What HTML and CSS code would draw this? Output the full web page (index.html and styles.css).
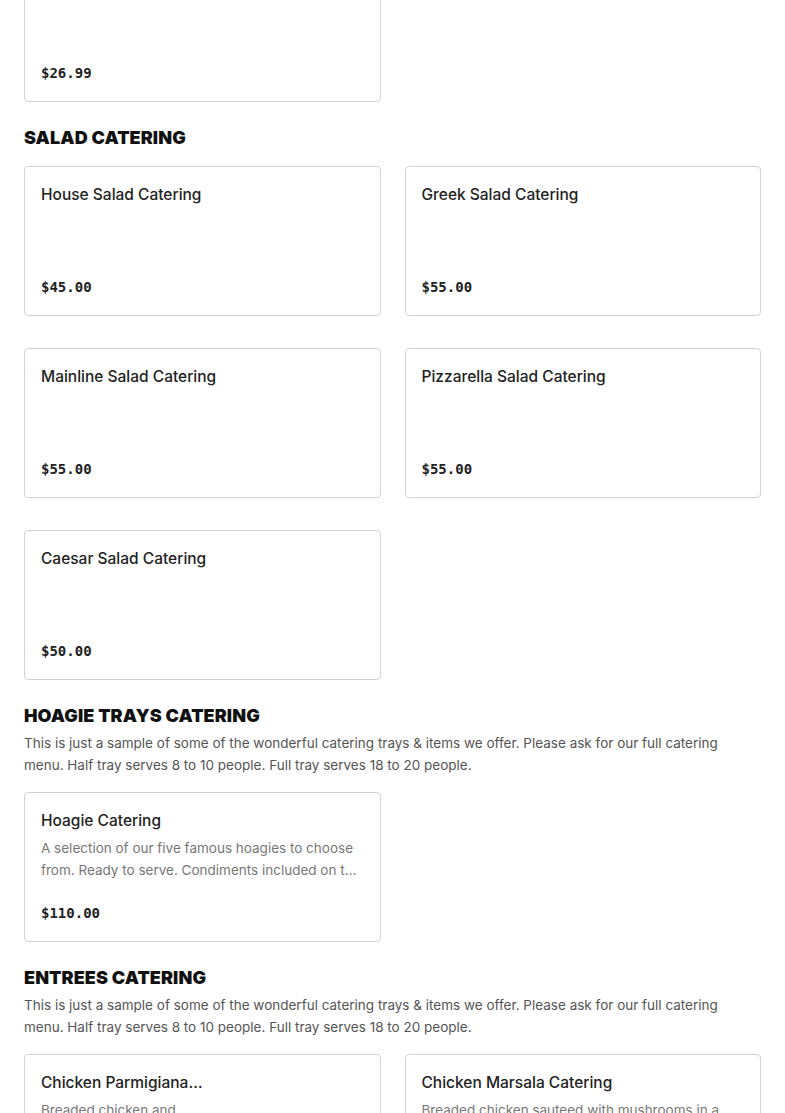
FILE: index.html
```html
<!DOCTYPE html>
<html lang="en">
<head>
<meta charset="UTF-8" />
<meta name="viewport" content="width=device-width, initial-scale=1" />
<title>Catering Menu</title>
<link rel="stylesheet" href="styles.css">
</head>
<body>
  <main class="menu">
    <section class="category category-first">
      <div class="item-grid">
        <div class="item-card">
          <div class="item-body">
            <h3 class="item-name">Party Tray</h3>
          </div>
          <div class="item-price">$26.99</div>
        </div>
      </div>
    </section>

    <section class="category">
      <h2 class="category-title">SALAD CATERING</h2>
      <div class="item-grid">
        <div class="item-card">
          <div class="item-body"><h3 class="item-name">House Salad Catering</h3></div>
          <div class="item-price">$45.00</div>
        </div>
        <div class="item-card">
          <div class="item-body"><h3 class="item-name">Greek Salad Catering</h3></div>
          <div class="item-price">$55.00</div>
        </div>
        <div class="item-card">
          <div class="item-body"><h3 class="item-name">Mainline Salad Catering</h3></div>
          <div class="item-price">$55.00</div>
        </div>
        <div class="item-card">
          <div class="item-body"><h3 class="item-name">Pizzarella Salad Catering</h3></div>
          <div class="item-price">$55.00</div>
        </div>
        <div class="item-card">
          <div class="item-body"><h3 class="item-name">Caesar Salad Catering</h3></div>
          <div class="item-price">$50.00</div>
        </div>
      </div>
    </section>

    <section class="category">
      <h2 class="category-title">HOAGIE TRAYS CATERING</h2>
      <p class="category-desc">This is just a sample of some of the wonderful catering trays &amp; items we offer. Please ask for our full catering menu. Half tray serves 8 to 10 people. Full tray serves 18 to 20 people.</p>
      <div class="item-grid">
        <div class="item-card">
          <div class="item-body">
            <h3 class="item-name">Hoagie Catering</h3>
            <p class="item-desc">A selection of our five famous hoagies to choose from. Ready to serve. Condiments included on the side.</p>
          </div>
          <div class="item-price">$110.00</div>
        </div>
      </div>
    </section>

    <section class="category">
      <h2 class="category-title">ENTREES CATERING</h2>
      <p class="category-desc">This is just a sample of some of the wonderful catering trays &amp; items we offer. Please ask for our full catering menu. Half tray serves 8 to 10 people. Full tray serves 18 to 20 people.</p>
      <div class="item-grid">
        <div class="item-card has-photo">
          <div class="item-body">
            <h3 class="item-name">Chicken Parmigiana Catering</h3>
            <p class="item-desc">Breaded chicken and marinara topped with melted mozzarella.</p>
          </div>
          <div class="item-photo"></div>
          <div class="item-price">$85.00</div>
        </div>
        <div class="item-card">
          <div class="item-body">
            <h3 class="item-name">Chicken Marsala Catering</h3>
            <p class="item-desc">Breaded chicken sauteed with mushrooms in a marsala wine sauce.</p>
          </div>
          <div class="item-price">$85.00</div>
        </div>
      </div>
    </section>
  </main>
</body>
</html>
```

FILE: styles.css
```css
* {
  box-sizing: border-box;
}
body {
  margin: 0;
  background: #fff;
  color: #222;
  font-family: Inter, 'Noto Sans', sans-serif;
  overflow: hidden;
}
.menu {
  padding: 0 24px;
}
/* primeira seção já vem rolada para cima */
.category-first {
  margin-top: -48px;
}
.category + .category {
  margin-top: 24px;
}
.category-title {
  margin: 0;
  font-size: 18px;
  line-height: 24px;
  font-weight: 900;
  color: #111;
  letter-spacing: 0.1px;
}
.category-desc {
  margin: 4px 0 0;
  font-size: 13.5px;
  line-height: 22px;
  color: #555;
}
.item-grid {
  display: grid;
  grid-template-columns: 1fr 1fr;
  column-gap: 24px;
  row-gap: 32px;
  margin-top: 16px;
}
.category-first .item-grid {
  margin-top: 0;
}
.item-card {
  height: 150px;
  border: 1px solid #d3d3d3;
  border-radius: 4px;
  padding: 16px;
  display: flex;
  flex-direction: column;
  position: relative;
}
.item-body {
  flex-grow: 1;
  min-width: 0;
}
.item-name {
  margin: 0;
  font-size: 15.5px;
  line-height: 24px;
  font-weight: 500;
  color: #222;
  white-space: nowrap;
  overflow: hidden;
  text-overflow: ellipsis;
}
.item-desc {
  margin: 4px 0 0;
  font-size: 13.5px;
  line-height: 22px;
  color: #777;
  display: -webkit-box;
  -webkit-line-clamp: 2;
  -webkit-box-orient: vertical;
  overflow: hidden;
}
.item-price {
  font-family: 'DejaVu Sans Mono', 'Liberation Mono', monospace;
  font-size: 14px;
  line-height: 24px;
  font-weight: bold;
  color: #222;
}
.has-photo .item-body {
  width: 162px;
}
/* foto ainda não carregada */
.item-photo {
  position: absolute;
  top: 16px;
  right: 16px;
  width: 118px;
  height: 118px;
  background: #fff;
}
```
